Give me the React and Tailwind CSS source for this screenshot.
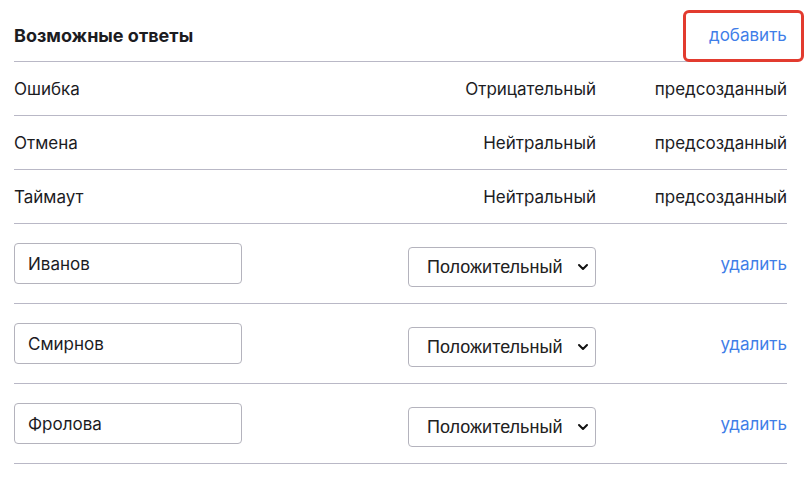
import { useState } from "react";

const presets = [
  { name: "Ошибка", tone: "Отрицательный" },
  { name: "Отмена", tone: "Нейтральный" },
  { name: "Таймаут", tone: "Нейтральный" },
];

const initialAnswers = ["Иванов", "Смирнов", "Фролова"];

export default function App() {
  const [answers, setAnswers] = useState(
    initialAnswers.map((name) => ({ name, tone: "positive" }))
  );

  const update = (i, key, value) => {
    setAnswers(answers.map((a, idx) => (idx === i ? { ...a, [key]: value } : a)));
  };

  return (
    <div className="min-h-screen bg-white font-['Inter','Noto_Sans',sans-serif] text-[17px] text-[#1c1c1f]">
      <div className="ml-[14px] w-[773px]">
        {/* Header */}
        <div className="flex h-[62px] items-center justify-between border-b border-[#b9b8c6] pt-[10px]">
          <h2 className="text-[18px] font-bold">Возможные ответы</h2>
          {/* highlighted add button */}
          <div className="-mr-[17px] flex h-[52px] w-[121px] shrink-0 items-center rounded-[6px] border-[3px] border-[#e23b2f] pl-[23px]">
            <button type="button" className="text-[#3f7ee8]">
              добавить
            </button>
          </div>
        </div>

        {/* Predefined answers */}
        {presets.map((p) => (
          <div
            key={p.name}
            className="grid h-[54px] grid-cols-[1fr_188px_191px] items-center border-b border-[#b9b8c6] pt-[3px]"
          >
            <span>{p.name}</span>
            <span className="text-right">{p.tone}</span>
            <span className="text-right">предсозданный</span>
          </div>
        ))}

        {/* Custom answers */}
        {answers.map((a, i) => (
          <div
            key={i}
            className="grid h-[80px] grid-cols-[1fr_188px_191px] items-center border-b border-[#b9b8c6]"
          >
            <div>
              <input
                type="text"
                value={a.name}
                onChange={(e) => update(i, "name", e.target.value)}
                className="h-[41px] w-[228px] rounded-[4px] border border-[#b4b3bd] px-[13px] text-[17px] text-[#1c1c1f] outline-none"
              />
            </div>
            <div className="relative mt-[7px]">
              <select
                value={a.tone}
                onChange={(e) => update(i, "tone", e.target.value)}
                className="h-[40px] w-[188px] appearance-none rounded-[4px] border border-[#b4b3bd] pl-[18px] font-['Liberation_Sans',Arial,sans-serif] text-[18px] text-[#222]"
              >
                <option value="positive">Положительный</option>
                <option value="neutral">Нейтральный</option>
                <option value="negative">Отрицательный</option>
              </select>
              <svg
                className="pointer-events-none absolute right-[7px] top-[15px]"
                width="12"
                height="10"
                viewBox="0 0 12 10"
                fill="none"
              >
                <path d="M2 3l4 4 4-4" stroke="#111" strokeWidth="2" strokeLinecap="round" strokeLinejoin="round" />
              </svg>
            </div>
            <div className="pt-[2px] text-right">
              <button type="button" className="text-[#3f7ee8]">
                удалить
              </button>
            </div>
          </div>
        ))}
      </div>
    </div>
  );
}
